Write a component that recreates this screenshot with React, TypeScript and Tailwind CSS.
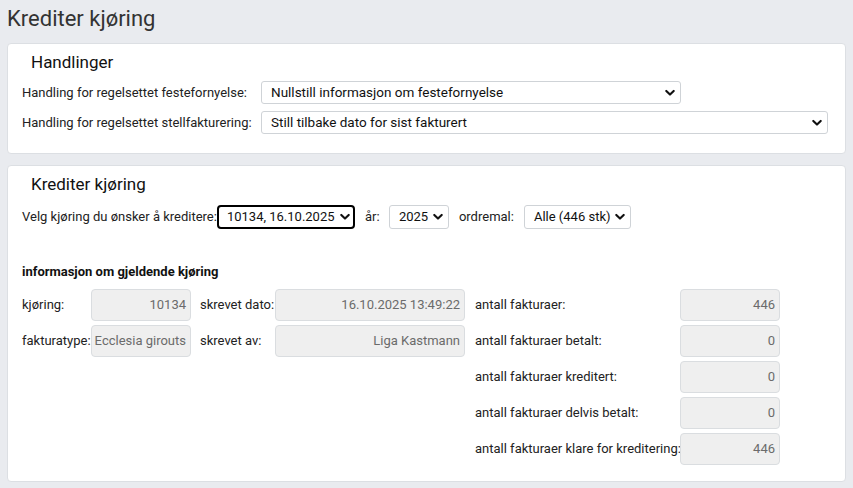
import type { ReactNode } from 'react';

const Chevron = ({ focused }: { focused?: boolean }) => (
  <svg
    className={`pointer-events-none absolute top-1/2 -translate-y-1/2 ${focused ? 'right-[3px]' : 'right-[5px]'}`}
    width="10"
    height="7"
    viewBox="0 0 10 7"
    fill="none"
  >
    <path d="M1.3 1.4 5 5.1 8.7 1.4" stroke="#111" strokeWidth="2.1" strokeLinecap="round" strokeLinejoin="round" />
  </svg>
);

const Select = ({
  value,
  className,
  focused,
  size = 'text-[13.5px]',
}: {
  value: string;
  className: string;
  focused?: boolean;
  size?: string;
}) => (
  <div
    className={
      focused
        ? `relative flex items-center rounded-[4px] border-2 border-black bg-white pl-[8px] ${className}`
        : `relative flex items-center rounded-[3px] border border-[#cfd3d7] bg-white pl-[9px] ${className}`
    }
  >
    <span className={`${size} text-[#111] whitespace-nowrap`}>{value}</span>
    <Chevron focused={focused} />
  </div>
);

const Field = ({ value, className = 'w-[100px]' }: { value: string; className?: string }) => (
  <div
    className={`flex h-[32px] items-center justify-end rounded-[4px] border border-[#dadde0] bg-[#efefef] px-[4px] text-[13px] text-[#6b6b6b] whitespace-nowrap ${className}`}
  >
    {value}
  </div>
);

const Row = ({ label, labelW, children }: { label: string; labelW: string; children: ReactNode }) => (
  <div className="flex h-[32px] items-center">
    <span className={`${labelW} text-[13px] text-[#222] whitespace-nowrap`}>{label}</span>
    {children}
  </div>
);

const stats = [
  { label: 'antall fakturaer:', value: '446' },
  { label: 'antall fakturaer betalt:', value: '0' },
  { label: 'antall fakturaer kreditert:', value: '0' },
  { label: 'antall fakturaer delvis betalt:', value: '0' },
  { label: 'antall fakturaer klare for kreditering:', value: '446' },
];

export default function App() {
  return (
    <div
      className="min-h-[488px] w-[853px] bg-[#e9ebef] px-[7px] pb-[6px] pt-[5px]"
      style={{ fontFamily: 'Roboto, "Liberation Sans", sans-serif' }}
    >
      <h1 className="text-[22px] leading-[28px] text-[#333]">Krediter kjøring</h1>

      {/* Handlinger */}
      <section className="mt-[10px] h-[111px] rounded-[4px] border border-[#dcdfe3] bg-white pl-[14px] pt-[6px]">
        <h2 className="pl-[9px] text-[17px] leading-[24px] text-[#111]">Handlinger</h2>
        <div className="mt-[7px] flex flex-col gap-[7px]">
          <div className="flex items-center">
            <span className="w-[239px] text-[13px] text-[#222]">Handling for regelsettet festefornyelse:</span>
            <Select value="Nullstill informasjon om festefornyelse" className="h-[23px] w-[420px]" />
          </div>
          <div className="flex items-center">
            <span className="w-[239px] text-[13px] text-[#222]">Handling for regelsettet stellfakturering:</span>
            <Select value="Still tilbake dato for sist fakturert" className="h-[23px] w-[567px]" />
          </div>
        </div>
      </section>

      {/* Krediter kjøring */}
      <section className="mt-[11px] h-[317px] rounded-[4px] border border-[#dcdfe3] bg-white pl-[14px] pt-[6px]">
        <h2 className="pl-[9px] text-[17px] leading-[24px] text-[#111]">Krediter kjøring</h2>
        <div className="mt-[9px] flex items-center">
          <span className="text-[13px] text-[#222]">Velg kjøring du ønsker å kreditere:</span>
          <Select value="10134, 16.10.2025" className="h-[24px] w-[138px]" focused size="text-[13px]" />
          <span className="ml-[10px] w-[24px] text-[13px] text-[#222]">år:</span>
          <Select value="2025" className="h-[24px] w-[60px]" size="text-[13px]" />
          <span className="ml-[10px] w-[65px] text-[13px] text-[#222]">ordremal:</span>
          <Select value="Alle (446 stk)" className="h-[24px] w-[107px]" size="text-[13px]" />
        </div>

        <h3 className="mt-[34px] text-[13px] font-bold leading-[18px] text-[#111]">informasjon om gjeldende kjøring</h3>

        <div className="mt-[8px] flex">
          <div className="flex flex-col gap-[4px]">
            <Row label="kjøring:" labelW="w-[69px]">
              <Field value="10134" />
            </Row>
            <Row label="fakturatype:" labelW="w-[69px]">
              <Field value="Ecclesia girouts" />
            </Row>
          </div>
          <div className="ml-[9px] flex flex-col gap-[4px]">
            <Row label="skrevet dato:" labelW="w-[75px]">
              <Field value="16.10.2025 13:49:22" className="w-[190px]" />
            </Row>
            <Row label="skrevet av:" labelW="w-[75px]">
              <Field value="Liga Kastmann" className="w-[190px]" />
            </Row>
          </div>
          <div className="ml-[10px] flex flex-col gap-[4px]">
            {stats.map((s) => (
              <Row key={s.label} label={s.label} labelW="w-[205px]">
                <Field value={s.value} />
              </Row>
            ))}
          </div>
        </div>
      </section>
    </div>
  );
}
